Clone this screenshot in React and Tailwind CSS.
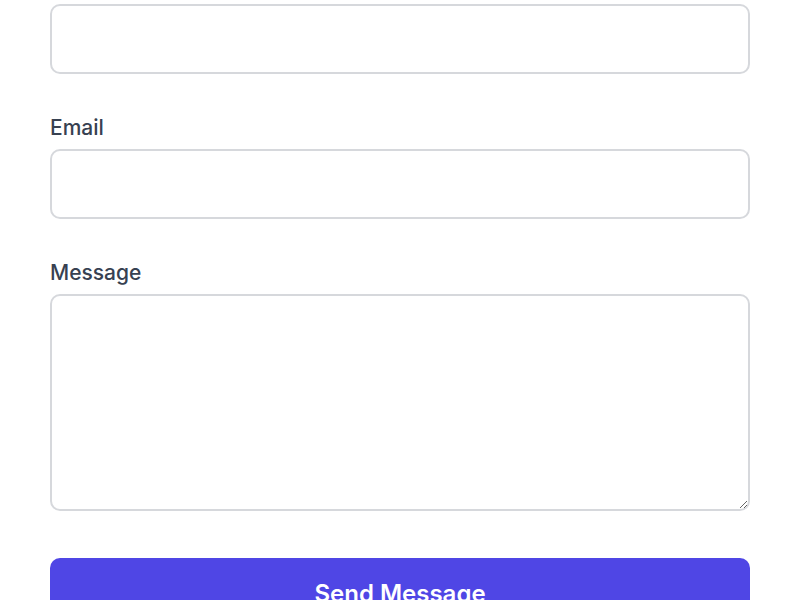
export default function App() {
  return (
    <div className="min-h-[600px] bg-white px-[50px] pt-[4px]" style={{ fontFamily: 'Inter, "Noto Sans", sans-serif' }}>
      <div className="flex flex-col">
        <input type="text" className="block h-[70px] w-full rounded-[10px] border-2 border-[#d6d8dc] bg-white px-4 text-[21px] outline-none" />

        <label className="mt-[36px] mb-[4px] block text-[21px] leading-[35px] font-medium text-[#374151]">Email</label>
        <input type="email" className="block h-[70px] w-full rounded-[10px] border-2 border-[#d6d8dc] bg-white px-4 text-[21px] outline-none" />

        <label className="mt-[36px] mb-[4px] block text-[21px] leading-[35px] font-medium text-[#374151]">Message</label>
        <textarea className="block h-[217px] w-full resize-y rounded-[10px] border-2 border-[#d6d8dc] bg-white px-4 py-3 text-[21px] outline-none" />

        <button className="mt-[47px] block w-full rounded-[10px] bg-[#4f46e5] pt-[18px] pb-[12px] text-[24px] leading-[35px] font-semibold text-white">Send Message</button>
      </div>
    </div>
  );
}
